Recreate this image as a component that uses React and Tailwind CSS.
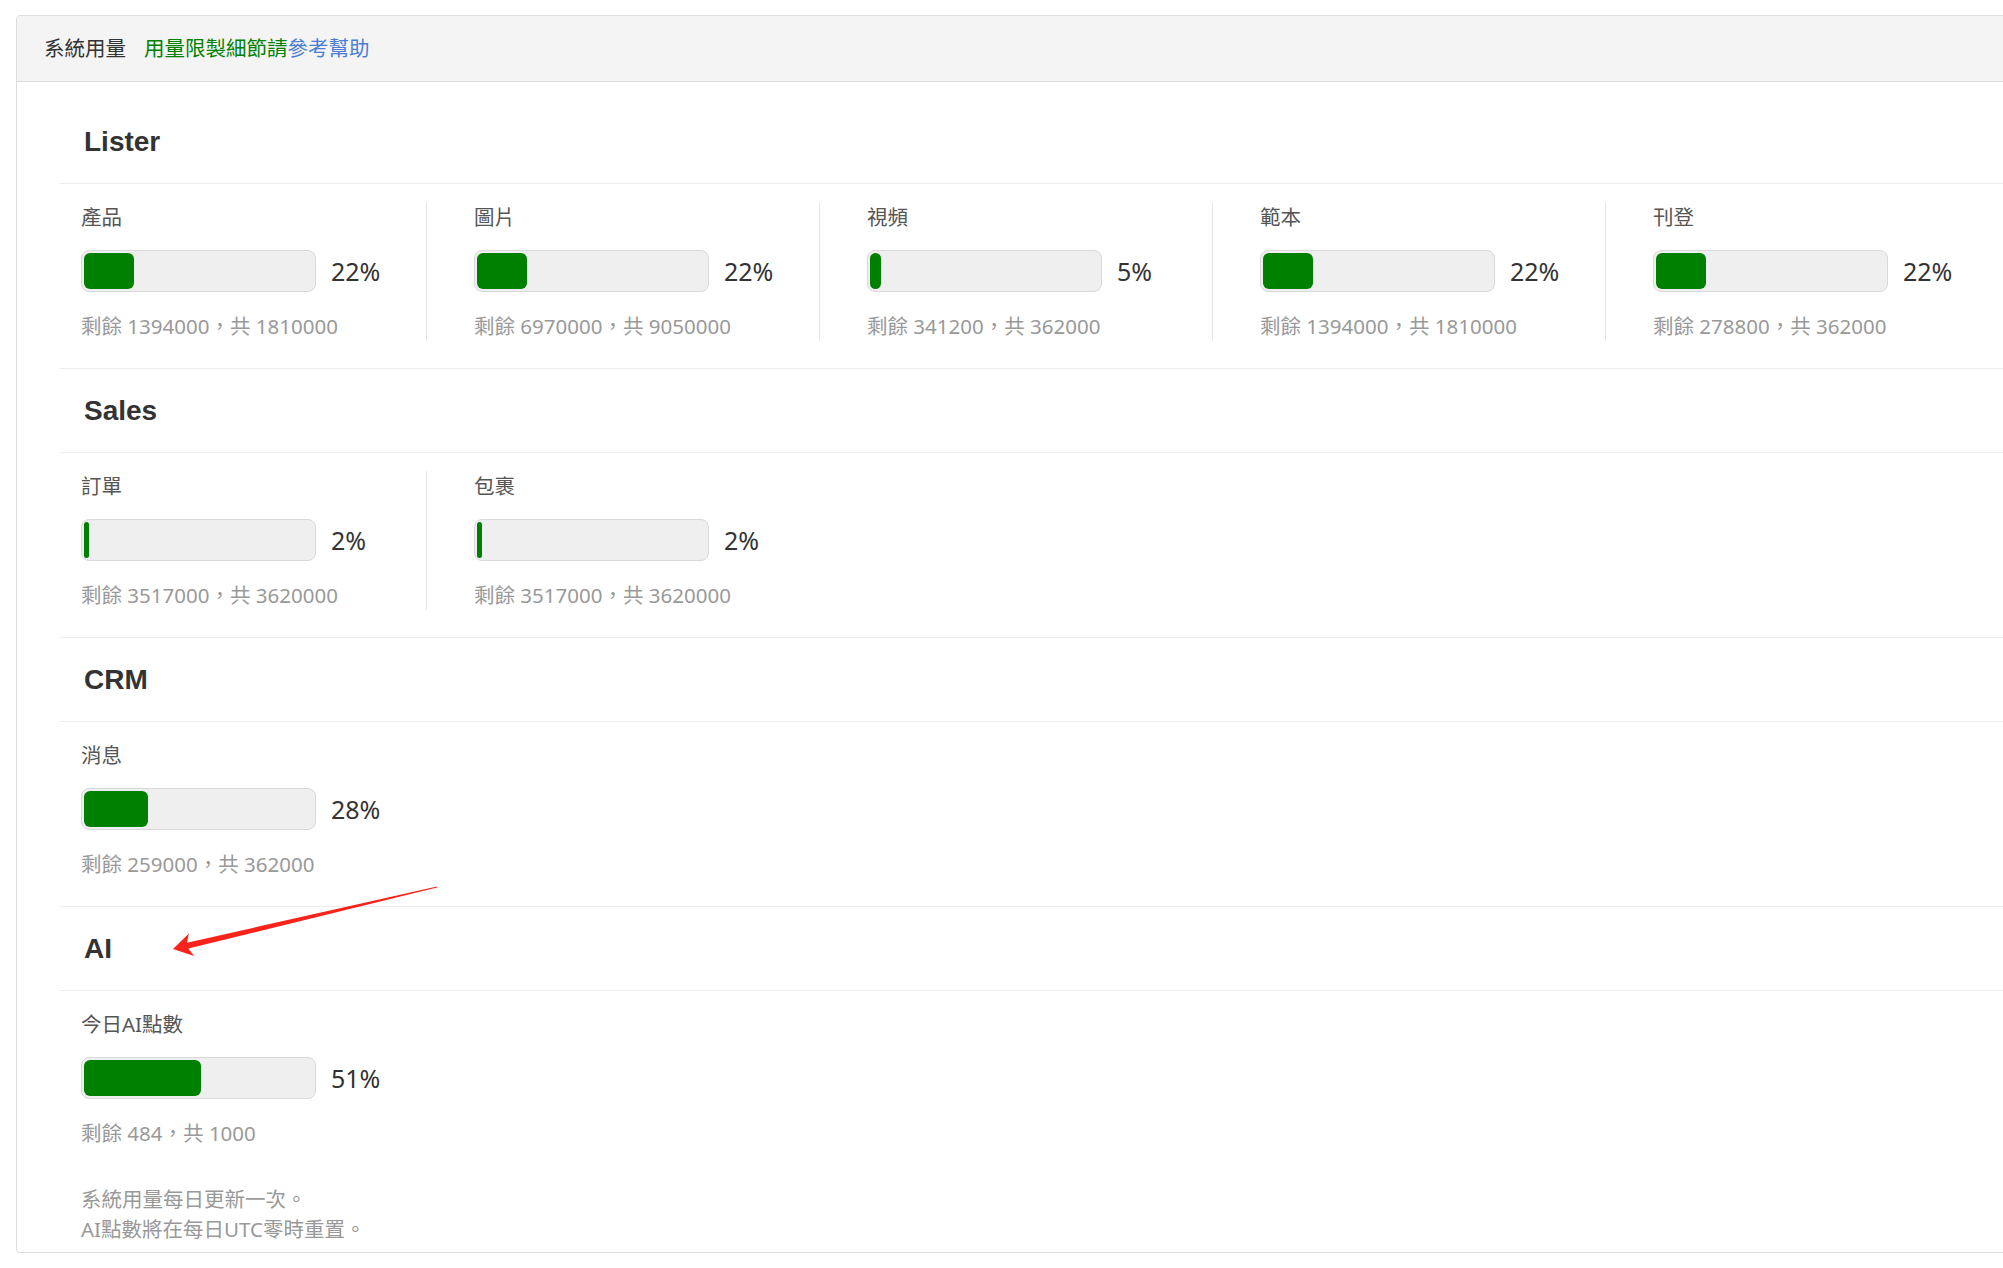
const sections = [
  {
    title: "Lister",
    items: [
      { label: "產品", pct: 22, left: 1394000, total: 1810000 },
      { label: "圖片", pct: 22, left: 6970000, total: 9050000 },
      { label: "視頻", pct: 5, left: 341200, total: 362000 },
      { label: "範本", pct: 22, left: 1394000, total: 1810000 },
      { label: "刊登", pct: 22, left: 278800, total: 362000 },
    ],
  },
  {
    title: "Sales",
    items: [
      { label: "訂單", pct: 2, left: 3517000, total: 3620000 },
      { label: "包裹", pct: 2, left: 3517000, total: 3620000 },
    ],
  },
  {
    title: "CRM",
    items: [{ label: "消息", pct: 28, left: 259000, total: 362000 }],
  },
  {
    title: "AI",
    items: [{ label: "今日AI點數", pct: 51, left: 484, total: 1000 }],
  },
];

function UsageItem({ item, last }) {
  return (
    <div
      className={`w-[367px] pl-[21px] ${last ? "" : "border-r border-[#e5e5e5]"}`}
    >
      <div className="text-[20.5px] leading-[30px] text-[#555]">{item.label}</div>
      <div className="mt-[18px] flex items-center">
        <div className="w-[235px] h-[42px] rounded-[8px] border border-[#d9d9d9] bg-[#efefef] p-[2px]">
          {/* bar width comes from data */}
          <div
            className="h-full rounded-[6px] bg-[#008000]"
            style={{ width: `${item.pct}%` }}
          />
        </div>
        <span className="ml-[15px] text-[25px] leading-none text-[#333]">
          {item.pct}%
        </span>
      </div>
      <div className="mt-[19px] text-[20.5px] leading-[30px] text-[#999]">
        剩餘 {item.left}，共 {item.total}
      </div>
    </div>
  );
}

function Section({ section, last }) {
  return (
    <div>
      <div className="h-[84px] flex items-center pl-[24px] border-b border-[#eee]">
        <h2 className="font-['Liberation_Sans',sans-serif] font-bold text-[28px] text-[#333]">
          {section.title}
        </h2>
      </div>
      <div
        className={`pt-[18px] pb-[27px] flex gap-[26px] ${last ? "" : "border-b border-[#eee]"}`}
      >
        {section.items.map((item, i) => (
          <UsageItem
            key={item.label}
            item={item}
            last={i === section.items.length - 1}
          />
        ))}
      </div>
    </div>
  );
}

export default function App() {
  return (
    <div className="relative w-[2003px] h-[1268px] overflow-hidden bg-white pt-[15px] pl-[16px] font-['Noto_Sans','Noto_Sans_CJK_TC',sans-serif]">
      <div className="w-[2100px] rounded-[4px] border border-[#ddd] bg-white">
        {/* header */}
        <div className="h-[66px] flex items-center pl-[27px] bg-[#f4f4f4] border-b border-[#ddd] rounded-t-[4px] text-[20.5px]">
          <span className="text-[#333]">系統用量</span>
          <span className="ml-[18px] text-[#008000]">用量限製細節請</span>
          <span className="text-[#4a7dd3]">參考幫助</span>
        </div>

        <div className="pt-[18px] pl-[43px] pr-[43px] pb-[8px]">
          {sections.map((s, i) => (
            <Section key={s.title} section={s} last={i === sections.length - 1} />
          ))}
          <div className="mt-[9px] pl-[21px] text-[20.5px] leading-[30px] text-[#999]">
            <div>系統用量每日更新一次。</div>
            <div>AI點數將在每日UTC零時重置。</div>
          </div>
        </div>
      </div>

      {/* red annotation arrow */}
      <svg
        className="absolute left-0 top-0 pointer-events-none"
        width="2003"
        height="1268"
        viewBox="0 0 2003 1268"
      >
        <polygon
          points="173,949 188.9,933.4 186.9,942.7 436.9,886.4 437.1,887.6 188.3,948.5 194.1,955.9"
          fill="#f8241b"
        />
      </svg>
    </div>
  );
}
